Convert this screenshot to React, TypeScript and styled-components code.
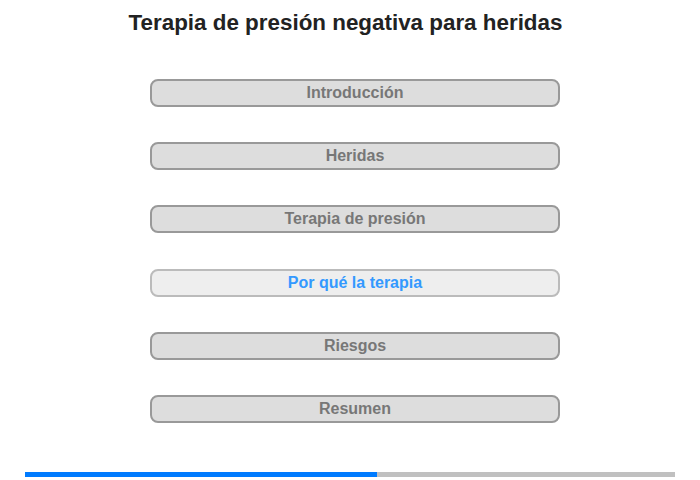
import React from "react";
import styled, { createGlobalStyle } from "styled-components";

const Global = createGlobalStyle`
  body {
    margin: 0;
    background: #fff;
    font-family: "Liberation Sans", Arial, sans-serif;
  }
`;

const Page = styled.div`
  width: 700px;
  height: 480px;
  display: flex;
  flex-direction: column;
  align-items: center;
`;

const Title = styled.h1`
  margin: 10px 0 0 -9px;
  font-size: 22.4px;
  line-height: 25px;
  font-weight: bold;
  color: #222;
`;

const MenuList = styled.div`
  margin: 44px 0 0 10px;
  display: flex;
  flex-direction: column;
  gap: 35.2px;
`;

const MenuButton = styled.div<{ $active?: boolean }>`
  box-sizing: border-box;
  width: 410px;
  height: 28px;
  border: 2px solid ${(p) => (p.$active ? "#bbb" : "#999")};
  border-radius: 8px;
  background: ${(p) => (p.$active ? "#eee" : "#ddd")};
  color: ${(p) => (p.$active ? "#3399ff" : "#777")};
  font-size: 16px;
  font-weight: bold;
  display: flex;
  align-items: center;
  justify-content: center;
`;

const Progress = styled.div`
  margin-top: auto;
  margin-bottom: 3px;
  width: 650px;
  height: 5px;
  background: #c0c0c0;
  display: flex;
`;

const ProgressFill = styled.div`
  height: 100%;
  background: #007bff;
`;

const items = [
  "Introducción",
  "Heridas",
  "Terapia de presión",
  "Por qué la terapia",
  "Riesgos",
  "Resumen",
];

export default function App() {
  const active = 3;
  const progress = 352 / 650;
  return (
    <Page>
      <Global />
      <Title>Terapia de presión negativa para heridas</Title>
      <MenuList>
        {items.map((it, i) => (
          <MenuButton key={it} $active={i === active}>
            {it}
          </MenuButton>
        ))}
      </MenuList>
      <Progress>
        <ProgressFill style={{ width: `${progress * 100}%` }} />
      </Progress>
    </Page>
  );
}
